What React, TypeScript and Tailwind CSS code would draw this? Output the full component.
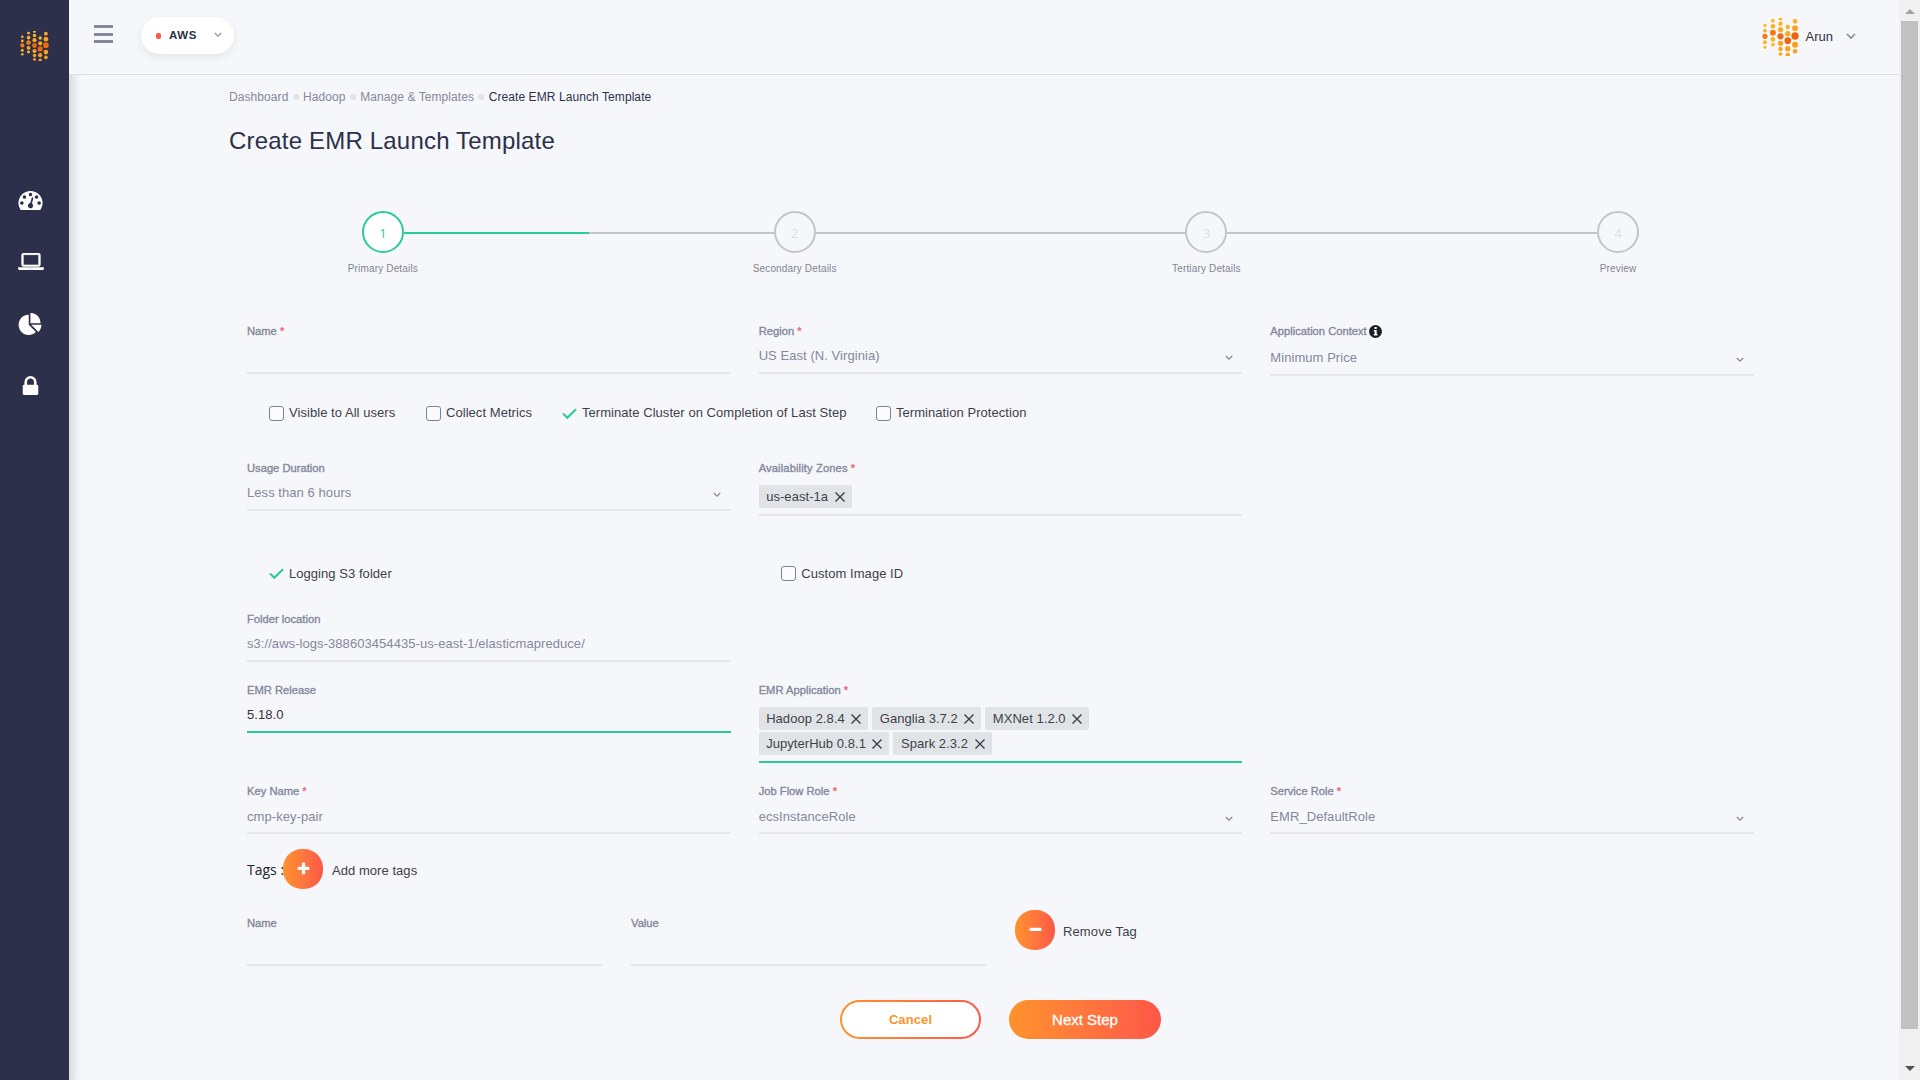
import React from "react";

type Dot = [number, number, number, string];

const LOGO_DOTS: Dot[] = [
  [195, 76, 4.8, "#fcb827"], [195, 92, 5.6, "#fbad22"], [195, 109, 8, "#f67a14"], [195, 127, 6, "#fbae22"], [195, 142, 4.8, "#fcb827"],
  [219, 62, 5.6, "#fcb827"], [219, 79, 7, "#fbb024"], [219, 98, 9, "#f67a14"], [219, 118, 7, "#fbb024"], [219, 134, 5.6, "#fcb827"],
  [242, 56, 5.5, "#fcb423"], [242, 71, 6.6, "#fcb423"], [242, 89, 8, "#fcaa1e"], [242, 109, 9.4, "#ee6a10"], [242, 130, 8, "#fba41e"], [242, 147, 6.6, "#fba41e"], [242, 162, 5.5, "#fba41e"],
  [264, 81, 6.6, "#fcb423"], [264, 101, 8, "#fca91e"], [264, 122, 10, "#ef640c"], [264, 146, 8, "#fba01c"], [264, 165, 6.6, "#fba01c"],
  [286, 64, 7, "#fbb024"], [286, 85, 9, "#fba61e"], [286, 108, 11, "#f0650a"], [286, 134, 9, "#fba01c"], [286, 154, 7, "#fba01c"],
];

function Logo({ className }: { className: string }) {
  return (
    <svg viewBox="186 54 112 114" preserveAspectRatio="none" className={className}>
      {LOGO_DOTS.map(([x, y, r, c], i) => (
        <circle key={i} cx={x} cy={y} r={r} fill={c} />
      ))}
    </svg>
  );
}

function Glyph({ d, box, className }: { d: string; box: string; className: string }) {
  return (
    <svg viewBox={box} className={className} fill="currentColor">
      <path d={d} />
    </svg>
  );
}

const TACHOMETER =
  "M384 1152q0-53-37.5-90.5t-90.5-37.5-90.5 37.5-37.5 90.5 37.5 90.5 90.5 37.5 90.5-37.5 37.5-90.5zm192-448q0-53-37.5-90.5t-90.5-37.5-90.5 37.5-37.5 90.5 37.5 90.5 90.5 37.5 90.5-37.5 37.5-90.5zm428 481l101-382q6-26-7.5-48.5t-38.5-29.5-48 6.5-30 39.5l-101 382q-60 5-107 43.5t-63 98.5q-20 77 20 146t117 89 146-20 89-117q16-60-6-117t-72-91zm660-33q0-53-37.5-90.5t-90.5-37.5-90.5 37.5-37.5 90.5 37.5 90.5 90.5 37.5 90.5-37.5 37.5-90.5zm-640-640q0-53-37.5-90.5t-90.5-37.5-90.5 37.5-37.5 90.5 37.5 90.5 90.5 37.5 90.5-37.5 37.5-90.5zm448 192q0-53-37.5-90.5t-90.5-37.5-90.5 37.5-37.5 90.5 37.5 90.5 90.5 37.5 90.5-37.5 37.5-90.5zm320 448q0 261-141 483-19 29-54 29h-1402q-35 0-54-29-141-221-141-483 0-182 71-348t191-286 286-191 348-71 348 71 286 191 191 286 71 348z";
const LAPTOP =
  "M416 1280q-66 0-113-47t-47-113v-704q0-66 47-113t113-47h1088q66 0 113 47t47 113v704q0 66-47 113t-113 47h-1088zm-32-864v704q0 13 9.5 22.5t22.5 9.5h1088q13 0 22.5-9.5t9.5-22.5v-704q0-13-9.5-22.5t-22.5-9.5h-1088q-13 0-22.5 9.5t-9.5 22.5zm1376 928h160v96q0 40-47 68t-113 28h-1600q-66 0-113-28t-47-68v-96h1760zm-720 96q16 0 16-16t-16-16h-160q-16 0-16 16t16 16h160z";
const PIE =
  "M768 890l546 546q-106 108-247.5 168t-298.5 60q-209 0-385.5-103t-279.5-279.5-103-385.5 103-385.5 279.5-279.5 385.5-103v762zm187 6h773q0 157-60 298.5t-168 247.5zm709-128h-768v-768q209 0 385.5 103t279.5 279.5 103 385.5z";
const LOCK =
  "M640 768h512v-192q0-106-75-181t-181-75-181 75-75 181v192zm832 96v576q0 40-28 68t-68 28h-960q-40 0-68-28t-28-68v-576q0-40 28-68t68-28h32v-192q0-184 132-316t316-132 316 132 132 316v192h32q40 0 68 28t28 68z";
const PLUS =
  "M1600 736v192q0 40-28 68t-68 28h-416v416q0 40-28 68t-68 28h-192q-40 0-68-28t-28-68v-416h-416q-40 0-68-28t-28-68v-192q0-40 28-68t68-28h416v-416q0-40 28-68t68-28h192q40 0 68 28t28 68v416h416q40 0 68 28t28 68z";
const MINUS =
  "M1600 736v192q0 40-28 68t-68 28h-1216q-40 0-68-28t-28-68v-192q0-40 28-68t68-28h1216q40 0 68 28t28 68z";

function Chevron({ className }: { className: string }) {
  return (
    <svg viewBox="0 0 10 7" className={className} fill="none" stroke="currentColor" strokeWidth="1.6">
      <path d="M1 1l4 4 4-4" />
    </svg>
  );
}

function Label({ text, required, wide }: { text: string; required?: boolean; wide?: boolean }) {
  return (
    <div className="h-4 text-[11.2px] leading-4 whitespace-nowrap text-[#84889a]">
      <span className={`[-webkit-text-stroke:0.35px_#84889a] ${wide ? "tracking-[0.12px]" : ""}`}>{text}</span>
      {required && <span className="font-bold text-[#fb5f70]"> *</span>}
    </div>
  );
}

interface FieldProps {
  label: string;
  value?: string;
  required?: boolean;
  select?: boolean;
  active?: boolean;
  info?: boolean;
  low?: boolean;
}

function Field({ label, value = "", required, select, active, info, low }: FieldProps) {
  return (
    <div className="min-w-0">
      <div className="flex items-center">
        <Label text={label} required={required} />
        {info && (
          <svg viewBox="0 0 13 13" className="ml-0.5 h-[13px] w-[13px]">
            <circle cx="6.5" cy="6.5" r="6.5" fill="#1d1f27" />
            <path d="M5.500 2h2.200v2H5.500zM4.800 5h2.900v4h.8v1.500H4.800V9h.8V6.500h-.8z" fill="#fff" />
          </svg>
        )}
      </div>
      <div
        className={`flex h-[35px] items-center justify-between border-b-2 text-[13px] tracking-[0.06px] ${
          active ? "border-[#29cc97] text-[#2f3138]" : "border-[#e6e7ea] text-[#84889a]"
        } ${info ? "mt-0.5" : ""} ${low ? "pt-0.5" : ""}`}
      >
        <span>{value}</span>
        {select && <Chevron className="mt-[5px] mr-[9.5px] h-[6px] w-[8px] text-[#84889a]" />}
      </div>
    </div>
  );
}

function Check({ text, checked, raised }: { text: string; checked?: boolean; raised?: boolean }) {
  return (
    <div className="flex h-[19px] items-center">
      {checked ? (
        <svg viewBox="0 0 15 15" className="h-[15px] w-[15px]" fill="none" stroke="#29cc97" strokeWidth="2.1">
          <path d="M1 7.500l4.300 4.200L14 3.200" />
        </svg>
      ) : (
        <span className="h-[15px] w-[15px] rounded-[3px] border border-[#7d8195] bg-[#fbfbfd]" />
      )}
      <span className={`ml-[5px] text-[13px] tracking-[0.05px] whitespace-nowrap text-[#3e4149] ${raised ? "pb-0.5" : ""}`}>{text}</span>
    </div>
  );
}

function Chip({ text }: { text: string }) {
  return (
    <div className="flex h-[23px] items-center rounded-[2px] bg-[#e1e4e7] pr-[7px] pl-[7.5px] text-[13px] tracking-[0.05px] whitespace-nowrap text-[#3e4149]">
      <span>{text}</span>
      <svg viewBox="0 0 10 10" className="ml-[6.5px] h-[10px] w-[10px]" fill="none" stroke="#3a3d45" strokeWidth="1.400">
        <path d="M.5.5l9 9M9.500.5l-9 9" />
      </svg>
    </div>
  );
}

function RoundButton({ d }: { d: string }) {
  return (
    <div className="flex h-[39.5px] w-10 shrink-0 items-center justify-center rounded-[19px] bg-linear-to-r from-[#ff922b] to-[#ff5648] text-white">
      <Glyph d={d} box="0 -60 1792 1792" className="h-[15px] w-[15px]" />
    </div>
  );
}

const STEPS = ["Primary Details", "Secondary Details", "Tertiary Details", "Preview"];

function Stepper() {
  return (
    <div className="grid w-[1647px] grid-cols-4">
      {STEPS.map((name, i) => (
        <div key={name} className="flex flex-col items-center">
          <div className="flex w-full items-center">
            <div className={`mt-0.5 h-0.5 flex-1 ${i === 0 ? "" : "bg-[#c2c4c8]"}`} />
            <div
              className={`flex h-[42px] w-[42px] items-center justify-center rounded-full border-2 pt-[3px] font-['Open_Sans',sans-serif] text-[13px] ${
                i === 0 ? "border-[#29cc97] bg-white text-[#29cc97]" : "border-[#c4c5c9] text-[#dcdee2]"
              }`}
            >
              {i + 1}
            </div>
            <div className={`mt-0.5 h-0.5 flex-1 ${i === 0 ? "bg-[#29cc97]" : i === 3 ? "" : "bg-[#c2c4c8]"}`} />
          </div>
          <div className="mt-2 h-4 text-[10px] leading-4 tracking-[0.16px] text-[#7f8492]">{name}</div>
        </div>
      ))}
    </div>
  );
}

function Crumb({ text }: { text: string }) {
  return (
    <>
      <span className="text-[#84889a]">{text}</span>
      <span className="mx-[4.300px] h-[6px] w-[6px] rounded-full bg-[#e2e3e4]" />
    </>
  );
}

export default function App() {
  return (
    <div className="flex h-[1080px] w-[1920px] overflow-hidden bg-[#f6f7fa] font-['Liberation_Sans',Arial,sans-serif]">
      <aside className="w-[69px] shrink-0 bg-[#2d304a] text-white">
        <Logo className="mt-[31px] ml-5 h-[30px] w-[29px]" />
        <div className="mt-[130px] ml-[18px] flex flex-col">
          <Glyph d={TACHOMETER} box="0 256 1792 1408" className="h-[19px] w-[25px]" />
          <Glyph d={LAPTOP} box="0 256 1920 1280" className="mt-[43px] h-[17px] w-[26px] stroke-white [stroke-width:40]" />
          <Glyph d={PIE} box="0 0 1728 1664" className="mt-[43px] h-[22px] w-[24px]" />
          <Glyph d={LOCK} box="320 128 1152 1408" className="mt-[41px] ml-1 h-[19px] w-[17px]" />
        </div>
      </aside>

      <div className="flex min-w-0 flex-1 flex-col">
        <header className="flex h-[75px] shrink-0 items-start border-b border-[#dfe0e4]">
          <div className="mt-[25px] ml-[25px] flex w-[19px] flex-col">
            <span className="h-[3px] bg-[#84889a]" />
            <span className="mt-[5px] h-[3px] bg-[#84889a]" />
            <span className="mt-1 h-[3px] bg-[#84889a]" />
          </div>
          <div className="mt-[17px] ml-7 flex h-[37px] w-[93px] items-center rounded-[19px] bg-white shadow-[0_3px_8px_rgba(0,0,0,0.08)]">
            <span className="ml-[15px] h-[6px] w-[5px] rounded-[2px] bg-[#ff564a]" />
            <span className="ml-2 w-[27px] text-[11.5px] font-bold tracking-[0.6px] text-[#2d304a]">AWS</span>
            <Chevron className="-mt-0.5 ml-[17.5px] h-[6px] w-[8px] text-[#8d98a8]" />
          </div>
          <div className="mt-[18px] mr-[43px] ml-auto flex h-[38px] items-center">
            <Logo className="h-[38px] w-[37px]" />
            <span className="ml-[7px] text-[13px] text-[#2f323c]">Arun</span>
            <Chevron className="-mt-0.5 ml-[13px] h-[7px] w-[10px] text-[#7f8c9f]" />
          </div>
        </header>

        <main className="min-h-0 flex-1 shadow-[inset_12px_0_10px_-8px_rgba(0,0,0,0.14)]">
          <nav className="mt-[14px] ml-40 flex h-4 items-center text-[12px] tracking-[0.08px]">
            <Crumb text="Dashboard" />
            <Crumb text="Hadoop" />
            <Crumb text="Manage &amp; Templates" />
            <span className="text-[#2d304a]">Create EMR Launch Template</span>
          </nav>
          <h1 className="mt-5 ml-40 h-8 text-[24px] leading-8 tracking-[0.19px] text-[#2d304a]">Create EMR Launch Template</h1>
          <div className="mt-[54px] ml-[108px]">
            <Stepper />
          </div>

          <form className="mt-[46px] ml-[178px] w-[1507px]">
            <div className="grid h-[53px] grid-cols-3 gap-7">
              <Field label="Name" required />
              <Field label="Region" value="US East (N. Virginia)" required select />
              <Field label="Application Context" value="Minimum Price" select info />
            </div>
            <div className="mt-7 ml-[22px] flex h-5">
              <div className="w-[157px]"><Check text="Visible to All users" raised /></div>
              <div className="w-[136px]"><Check text="Collect Metrics" raised /></div>
              <div className="w-[314px]"><Check text="Terminate Cluster on Completion of Last Step" checked raised /></div>
              <Check text="Termination Protection" raised />
            </div>
            <div className="mt-9 grid h-14 grid-cols-3 gap-7">
              <Field label="Usage Duration" value="Less than 6 hours" select />
              <div>
                <Label text="Availability Zones" required wide />
                <div className="flex h-10 items-start border-b-2 border-[#e6e7ea] pt-[9px]">
                  <Chip text="us-east-1a" />
                </div>
              </div>
            </div>
            <div className="mt-12 grid h-5 grid-cols-3 gap-7 pl-[22px]">
              <Check text="Logging S3 folder" checked />
              <div className="pl-2"><Check text="Custom Image ID" /></div>
            </div>
            <div className="mt-[27px] grid grid-cols-3 gap-7">
              <Field label="Folder location" value="s3://aws-logs-388603454435-us-east-1/elasticmapreduce/" />
            </div>
            <div className="mt-5 grid h-[81px] grid-cols-3 gap-7">
              <Field label="EMR Release" value="5.18.0" active />
              <div>
                <Label text="EMR Application" required />
                <div className="flex h-[65px] flex-wrap content-start items-start gap-x-1 gap-y-0.5 border-b-2 border-[#29cc97] pt-[9px] pr-32">
                  <Chip text="Hadoop 2.8.4" />
                  <Chip text="Ganglia 3.7.2" />
                  <Chip text="MXNet 1.2.0" />
                  <Chip text="JupyterHub 0.8.1" />
                  <Chip text="Spark 2.3.2" />
                </div>
              </div>
            </div>
            <div className="mt-5 grid h-[51px] grid-cols-3 gap-7">
              <Field label="Key Name" value="cmp-key-pair" required low />
              <Field label="Job Flow Role" value="ecsInstanceRole" required select low />
              <Field label="Service Role" value="EMR_DefaultRole" required select low />
            </div>
            <div className="mt-[15px] flex h-10 items-start">
              <span className="mt-[11px] w-9 font-['Open_Sans',sans-serif] text-[14px] leading-5 whitespace-nowrap text-[#212529]">Tags :</span>
              <RoundButton d={PLUS} />
              <span className="mt-[12px] ml-[9px] text-[13px] leading-5 tracking-[0.05px] text-[#3e4149]">Add more tags</span>
            </div>
            <div className="mt-[21px] flex h-14 gap-7">
              <div className="mt-[5px] w-[356px]"><Field label="Name" /></div>
              <div className="mt-[5px] w-[356px]"><Field label="Value" /></div>
              <div className="flex h-10 items-start">
                <RoundButton d={MINUS} />
                <span className="mt-[12px] ml-2 text-[13px] leading-5 tracking-[0.12px] text-[#3e4149]">Remove Tag</span>
              </div>
            </div>
            <div className="mt-[34px] ml-[593px] flex gap-7">
              <div className="h-[39px] w-[141px] rounded-[20px] bg-linear-to-r from-[#ff922b] to-[#ff5648] p-0.5">
                <div className="flex h-full w-full items-center justify-center rounded-[18px] bg-white text-[13px] font-bold tracking-[0.1px] text-[#ff922b]">
                  Cancel
                </div>
              </div>
              <div className="flex h-[39px] w-[152px] items-center justify-center rounded-[20px] bg-linear-to-r from-[#ff922b] to-[#ff5648] pt-px text-[15px] text-white [-webkit-text-stroke:0.3px_white]">
                Next Step
              </div>
            </div>
          </form>
        </main>
      </div>

      <div className="flex w-[21px] shrink-0 flex-col items-center bg-[#f0f0f0]">
        <svg viewBox="0 0 10 5" className="mt-[9px] h-[5px] w-[10px]"><path d="M5 0l5 5H0z" fill="#a3a3a3" /></svg>
        <div className="mt-[7px] h-[1008px] w-[17px] bg-[#c1c1c1]" />
        <svg viewBox="0 0 10 5" className="mt-[37px] h-[5px] w-[10px]"><path d="M0 0h10L5 5z" fill="#505050" /></svg>
      </div>
    </div>
  );
}
